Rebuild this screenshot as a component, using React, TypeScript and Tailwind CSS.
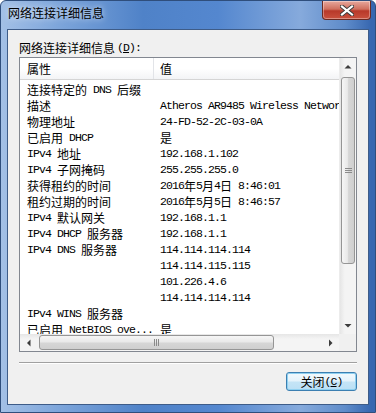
import React from "react";

const CJK = /[\u3000-\u9fff\uff00-\uffef]/;

function Mixed({ text }: { text: string }) {
  const parts = text.match(/[\u3000-\u9fff\uff00-\uffef]+|[^\u3000-\u9fff\uff00-\uffef]+/g) || [];
  return (
    <>
      {parts.map((p, i) =>
        CJK.test(p) ? (
          <span key={i} className="font-['Noto_Sans_CJK_SC',sans-serif] text-[12px] leading-[16px]">
            {p}
          </span>
        ) : (
          <span key={i} className="font-['Liberation_Mono',monospace] text-[11.5px] tracking-[-0.9px] leading-[16px] whitespace-pre">
            {p}
          </span>
        )
      )}
    </>
  );
}

const rows: [string, string][] = [
  ["连接特定的 DNS 后缀", ""],
  ["描述", "Atheros AR9485 Wireless Network Adapter"],
  ["物理地址", "24-FD-52-2C-03-0A"],
  ["已启用 DHCP", "是"],
  ["IPv4 地址", "192.168.1.102"],
  ["IPv4 子网掩码", "255.255.255.0"],
  ["获得租约的时间", "2016年5月4日 8:46:01"],
  ["租约过期的时间", "2016年5月5日 8:46:57"],
  ["IPv4 默认网关", "192.168.1.1"],
  ["IPv4 DHCP 服务器", "192.168.1.1"],
  ["IPv4 DNS 服务器", "114.114.114.114"],
  ["", "114.114.115.115"],
  ["", "101.226.4.6"],
  ["", "114.114.114.114"],
  ["IPv4 WINS 服务器", ""],
  ["已启用 NetBIOS ove...", "是"],
];

function Tri({ dir }: { dir: "up" | "down" | "left" | "right" }) {
  const pts: Record<string, string> = {
    up: "0.5,4.5 4,1 7.5,4.5",
    down: "0.5,1 4,4.5 7.5,1",
    left: "4.5,0.5 1,4 4.5,7.5",
    right: "1,0.5 4.5,4 1,7.5",
  };
  const vertical = dir === "up" || dir === "down";
  return (
    <svg width={vertical ? 8 : 6} height={vertical ? 6 : 8} viewBox={vertical ? "0 0 8 6" : "0 0 6 8"}>
      <polygon points={pts[dir]} fill="#3c3c3c" />
    </svg>
  );
}

function VScroll() {
  return (
    <div className="w-[17px] h-full flex flex-col bg-[linear-gradient(to_right,#e6e6e6,#f4f4f4_30%,#f4f4f4)] border-l border-[#ececec]">
      <div className="h-[17px] flex items-center justify-center">
        <Tri dir="up" />
      </div>
      <div className="mt-[2px] mx-[1px] h-[187px] rounded-[3px] border border-[#959595] bg-[linear-gradient(to_right,#f6f6f6,#e9e9e9_45%,#d6d6d6_55%,#cfcfcf)] flex items-center justify-center">
        <div className="flex flex-col gap-[1px]">
          <div className="w-[7px] h-[1px] bg-[#8a8a8a]" />
          <div className="w-[7px] h-[1px] bg-[#8a8a8a]" />
          <div className="w-[7px] h-[1px] bg-[#8a8a8a]" />
        </div>
      </div>
      <div className="flex-1" />
      <div className="h-[17px] flex items-center justify-center">
        <Tri dir="down" />
      </div>
    </div>
  );
}

function HScroll() {
  return (
    <div className="h-[17px] flex bg-[linear-gradient(to_bottom,#e6e6e6,#f4f4f4_30%,#f4f4f4)]">
      <div className="w-[17px] flex items-center justify-center">
        <Tri dir="left" />
      </div>
      <div className="ml-[2px] my-[1px] w-[235px] rounded-[3px] border border-[#959595] bg-[linear-gradient(to_bottom,#f6f6f6,#e9e9e9_45%,#d6d6d6_55%,#cfcfcf)] flex items-center justify-center">
        <div className="flex gap-[1px]">
          <div className="w-[1px] h-[7px] bg-[#8a8a8a]" />
          <div className="w-[1px] h-[7px] bg-[#8a8a8a]" />
          <div className="w-[1px] h-[7px] bg-[#8a8a8a]" />
        </div>
      </div>
      <div className="flex-1" />
      <div className="w-[17px] flex items-center justify-center">
        <Tri dir="right" />
      </div>
      <div className="w-[17px] bg-[#f0f0f0]" />
    </div>
  );
}

export default function App() {
  return (
    <div className="w-[376px] h-[413px] flex flex-col rounded-t-[6px] border border-[#2f4e7c] bg-[linear-gradient(to_right,#a3c0e6,#7ea6db_15%,#4f82c8_38%,#5487cf_58%,#86aadc_80%,#5f8cca_92%,#3767b0_99%)] overflow-hidden">
      {/* Title bar */}
      <div className="h-[28px] flex items-start shrink-0">
        <div className="pl-[7px] pt-[5px] text-[12px] leading-[14px] text-black font-['Noto_Sans_CJK_SC',sans-serif] [text-shadow:0_0_6px_rgba(255,255,255,0.9)]">
          网络连接详细信息
        </div>
        <div className="ml-auto mr-[4px] w-[49px] h-[19px] rounded-b-[4px] border border-t-0 border-[#6b2a22] bg-[linear-gradient(to_bottom,#e7a89d,#d0705f_45%,#b8392a_55%,#c9513e)] flex items-center justify-center shadow-[inset_0_0_0_1px_rgba(255,255,255,0.35)]">
          <svg width="14" height="11" viewBox="0 0 14 11">
            <path d="M2 1.5 L12 9.5 M12 1.5 L2 9.5" stroke="#3a3a3a" strokeWidth="4" strokeLinecap="square" />
            <path d="M2 1.5 L12 9.5 M12 1.5 L2 9.5" stroke="#ffffff" strokeWidth="2.2" strokeLinecap="square" />
          </svg>
        </div>
      </div>

      {/* Client area */}
      <div className="mx-[6px] mb-[7px] flex-1 bg-[#f0f0f0] border border-[#3e5c88] flex flex-col px-[11px] pt-[9px]">
        <div className="h-[18px] flex items-center text-black whitespace-nowrap">
          <Mixed text="网络连接详细信息" />
          <span className="ml-[2px] font-['Liberation_Mono',monospace] text-[11.5px] tracking-[-0.9px] leading-[16px]">
            (<span className="underline">D</span>):
          </span>
        </div>

        <div className="w-[338px] h-[295px] border border-[#828790] bg-white flex flex-col">
          <div className="flex-1 flex min-h-0">
            <div className="flex-1 flex flex-col overflow-hidden">
              <div className="h-[22px] shrink-0 flex border-b border-[#d5d5d5] bg-[linear-gradient(to_bottom,#ffffff,#ffffff_50%,#f3f4f6)]">
                <div className="w-[134px] pl-[7px] flex items-center border-r border-[#e2e4e8] text-black">
                  <Mixed text="属性" />
                </div>
                <div className="flex-1 pl-[6px] flex items-center text-black">
                  <Mixed text="值" />
                </div>
              </div>
              <div className="flex flex-col pt-[2px]">
                {rows.map(([k, v], i) => (
                  <div key={i} className="h-[16px] shrink-0 flex items-center text-black whitespace-nowrap">
                    <div className="w-[134px] pl-[7px] h-[16px] flex items-center overflow-hidden">
                      <Mixed text={k} />
                    </div>
                    <div className="flex-1 pl-[6px] h-[16px] flex items-center overflow-hidden">
                      <Mixed text={v} />
                    </div>
                  </div>
                ))}
              </div>
            </div>
            <VScroll />
          </div>
          <HScroll />
        </div>

        <div className="mt-[10px] w-[338px] h-[2px] border-t border-[#a0a0a0] border-b border-b-white" />

        <div className="mt-[8px] w-[338px] flex justify-end">
          <div className="w-[71px] h-[19px] rounded-[3px] border border-[#3c7fb1] bg-[linear-gradient(to_bottom,#f2f9fd,#e5f3fb_45%,#c4e4f6_55%,#bbe0f5)] shadow-[inset_0_0_0_1px_#8fd0f0] flex items-center justify-center text-black">
            <Mixed text="关闭" />
            <span className="font-['Liberation_Mono',monospace] text-[11.5px] tracking-[-0.9px] leading-[16px]">
              (<span className="underline">C</span>)
            </span>
          </div>
        </div>
      </div>
    </div>
  );
}
